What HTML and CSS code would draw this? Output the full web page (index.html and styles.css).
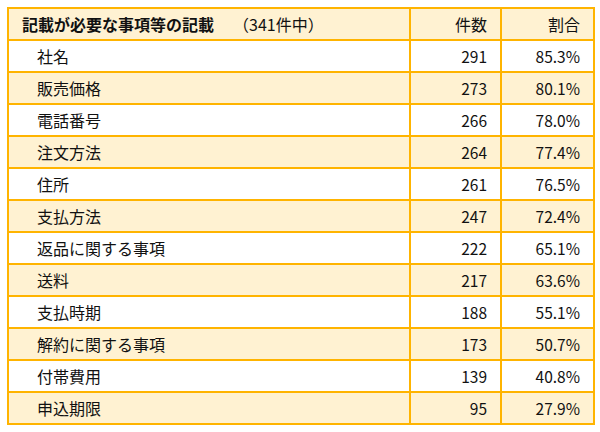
FILE: index.html
```html
<!DOCTYPE html>
<html lang="ja">
<head>
<meta charset="utf-8">
<link rel="stylesheet" href="styles.css">
</head>
<body>
<table class="tbl">
  <colgroup>
    <col class="c1"><col class="c2"><col class="c3">
  </colgroup>
  <thead>
    <tr class="head">
      <th class="name"><span class="title">記載が必要な事項等の記載</span><span class="count">（341件中）</span></th>
      <th class="num">件数</th>
      <th class="num">割合</th>
    </tr>
  </thead>
  <tbody>
    <tr><td class="item">社名</td><td class="num">291</td><td class="num">85.3%</td></tr>
    <tr class="alt"><td class="item">販売価格</td><td class="num">273</td><td class="num">80.1%</td></tr>
    <tr><td class="item">電話番号</td><td class="num">266</td><td class="num">78.0%</td></tr>
    <tr class="alt"><td class="item">注文方法</td><td class="num">264</td><td class="num">77.4%</td></tr>
    <tr><td class="item">住所</td><td class="num">261</td><td class="num">76.5%</td></tr>
    <tr class="alt"><td class="item">支払方法</td><td class="num">247</td><td class="num">72.4%</td></tr>
    <tr><td class="item">返品に関する事項</td><td class="num">222</td><td class="num">65.1%</td></tr>
    <tr class="alt"><td class="item">送料</td><td class="num">217</td><td class="num">63.6%</td></tr>
    <tr><td class="item">支払時期</td><td class="num">188</td><td class="num">55.1%</td></tr>
    <tr class="alt"><td class="item">解約に関する事項</td><td class="num">173</td><td class="num">50.7%</td></tr>
    <tr><td class="item">付帯費用</td><td class="num">139</td><td class="num">40.8%</td></tr>
    <tr class="alt"><td class="item">申込期限</td><td class="num">95</td><td class="num">27.9%</td></tr>
  </tbody>
</table>
</body>
</html>
```

FILE: styles.css
```css
html, body {
  margin: 0;
  padding: 0;
  background: #ffffff;
}
body {
  font-family: "Noto Sans CJK JP", "Noto Sans", sans-serif;
  color: #111111;
}
.tbl {
  margin: 7px 0 0 7px;
  border-collapse: separate;
  border-spacing: 0;
  border-top: 2px solid #ffb400;
  border-left: 2px solid #ffb400;
  table-layout: fixed;
  width: 586px;
  font-size: 16px;
}
.c1 { width: 402px; }
.c2 { width: 91px; }
.c3 { width: 93px; }
.tbl th, .tbl td {
  border-right: 2px solid #ffb400;
  border-bottom: 2px solid #ffb400;
  height: 30px;
  padding: 0 13px;
  box-sizing: content-box;
  line-height: 30px;
  white-space: nowrap;
  font-weight: normal;
}
.head th {
  background: #fff2d2;
}
.alt td {
  background: #fff2d2;
}
.name {
  text-align: left;
}
.title {
  font-weight: bold;
}
.count {
  margin-left: 19px;
}
.item {
  text-align: left;
  padding-left: 28px !important;
}
.num {
  text-align: right;
}
td.num {
  font-size: 15.5px;
}
```
